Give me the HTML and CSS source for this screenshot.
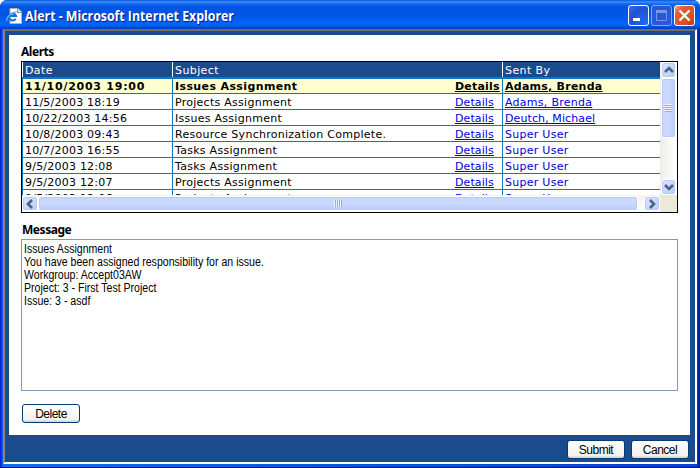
FILE: index.html
```html
<!DOCTYPE html>
<html lang="en">
<head>
<meta charset="utf-8">
<title>Alert - Microsoft Internet Explorer</title>
<link rel="stylesheet" href="styles.css">
</head>
<body>
<div class="window">
  <header class="titlebar">
    <svg class="ie" width="16" height="16" viewBox="0 0 16 16">
      <path d="M4 .5h8l3.500 3.500V15.500H4z" fill="#fff" stroke="#b5b59a"/>
      <path d="M11.500 .5V4.500h4" fill="#e4e4d4" stroke="#8e8e80"/>
      <path d="M9.700 10.800A3.500 3.500 0 1 1 10 8H3.500" fill="none" stroke="#1673d3" stroke-width="2"/>
      <path d="M1 13C-1 10 7 3 11 4" fill="none" stroke="#67b8f4" stroke-width="1.200"/>
    </svg>
    <h1>Alert - Microsoft Internet Explorer</h1>
    <div class="controls">
      <span class="ctl"><svg width="21" height="21"><rect x="5" y="13" width="7" height="3" fill="#fff"/></svg></span>
      <span class="ctl dim"><svg width="21" height="21"><path d="M5 6.500H16M5.500 6V15.500H15.500V6" fill="none" stroke="#7c94ea"/><path d="M5 6.500H16" stroke="#7c94ea" stroke-width="3"/></svg></span>
      <span class="ctl close"><svg width="21" height="21"><path d="M5.500 5.500l10 10M15.500 5.500l-10 10" stroke="#fff" stroke-width="2.300"/></svg></span>
    </div>
  </header>
  <div class="client">
    <main class="page">
      <h2>Alerts</h2>
      <section class="listbox">
        <div class="rows">
          <div class="row head"><span>Date</span><span>Subject</span><span></span><span>Sent By</span></div>
          <div class="row sel"><span>11/10/2003 19:00</span><span>Issues Assignment</span><span><a>Details</a></span><span><a>Adams, Brenda</a></span></div>
          <div class="row"><span>11/5/2003 18:19</span><span>Projects Assignment</span><span><a>Details</a></span><span><a>Adams, Brenda</a></span></div>
          <div class="row"><span>10/22/2003 14:56</span><span>Issues Assignment</span><span><a>Details</a></span><span><a class="tight">Deutch, Michael</a></span></div>
          <div class="row"><span>10/8/2003 09:43</span><span>Resource Synchronization Complete.</span><span><a>Details</a></span><span class="user">Super User</span></div>
          <div class="row"><span>10/7/2003 16:55</span><span>Tasks Assignment</span><span><a>Details</a></span><span class="user">Super User</span></div>
          <div class="row"><span>9/5/2003 12:08</span><span>Tasks Assignment</span><span><a>Details</a></span><span class="user">Super User</span></div>
          <div class="row"><span>9/5/2003 12:07</span><span>Projects Assignment</span><span><a>Details</a></span><span class="user">Super User</span></div>
          <div class="row"><span>9/5/2003 12:06</span><span>Projects Assignment</span><span><a>Details</a></span><span class="user">Super User</span></div>
        </div>
        <div class="vbar">
          <span class="arrow"><svg width="14" height="14"><path d="M3 9l4-4 4 4" /></svg></span>
          <span class="thumb"><i></i></span>
          <span class="arrow end"><svg width="14" height="14"><path d="M3 5l4 4 4-4"/></svg></span>
        </div>
        <div class="hbar">
          <span class="arrow"><svg width="14" height="14"><path d="M9 3L5 7l4 4"/></svg></span>
          <span class="thumb"><i></i></span>
          <span class="arrow end"><svg width="14" height="14"><path d="M5 3l4 4-4 4"/></svg></span>
        </div>
        <div class="corner"></div>
      </section>
      <h2 class="msg-title">Message</h2>
      <div class="message"><p>Issues Assignment</p><p>You have been assigned responsibility for an issue.</p><p>Workgroup: Accept03AW</p><p>Project: 3 - First Test Project</p><p>Issue: 3 - asdf</p></div>
      <button class="delete">Delete</button>
    </main>
    <footer class="footer"><button>Submit</button><button>Cancel</button></footer>
  </div>
</div>
</body>
</html>
```

FILE: styles.css
```css
* { box-sizing: border-box; }
body { margin: 0; background: #fff; font-family: "Liberation Sans", sans-serif; overflow: hidden; }
h1, h2, p { margin: 0; }
.window { width: 700px; height: 468px; display: flex; flex-direction: column; padding: 0 3px 3px; border-radius: 7px 7px 0 0; overflow: hidden; background: linear-gradient(90deg, #0019cf 0, #0831d9 1px, #166aee 3px, #0855dd 50%, #0441d8 697px, #001da0 699px); border-bottom: 1px solid #00138c; }
.titlebar { height: 29px; flex: none; margin: 0 -3px; padding: 2px 5px 0 6px; display: flex; align-items: center; background: linear-gradient(#0058e0 0, #3c8cf8 2px, #1268ee 4px, #0054e3 7px, #0055e5 15px, #0264fb 22px, #0264fb 25px, #0046cf 28px, #003dbc 29px); }
.ie { flex: none; margin-right: 3px; }
h1 { font: bold 14px/20px "Open Sans", sans-serif; color: #fff; text-shadow: 1px 1px 1px #0a1883; white-space: nowrap; transform: scaleX(.88); transform-origin: 0 50%; }
.controls { margin-left: auto; display: flex; gap: 2px; }
.ctl { width: 21px; height: 21px; border: 1px solid #fff; border-radius: 3px; background: radial-gradient(circle at 80% 80%, #1d68f4, #2350d2 60%, #3c6fe5); display: flex; justify-content: center; align-items: center; overflow: hidden; }
.ctl svg { flex: none; }
.dim { border-color: #8ba4ef; background: #2858d6; }
.close { background: linear-gradient(135deg, #f0a58d 0, #e25d3a 25%, #de4c20 75%, #c03909); }
.client { flex: 1; min-height: 0; display: flex; flex-direction: column; border: 2px solid; border-color: #716f64 #fff #fff #8d8376; background: #1a4b8c; padding: 4px 5px 0 4px; }
.page { height: 400px; flex: none; background: #fff; padding: 8px 12px 0; }
h2 { font: bold 12px/17px "Noto Sans", sans-serif; letter-spacing: -0.45px; height: 18px; }
.listbox { width: 657px; height: 152px; border: 1px solid #000; display: grid; grid-template-columns: 638px 17px; grid-template-rows: 133px 17px; background: #ece9d8; }
.rows { overflow: hidden; background: #fff; font: 11px/17px "DejaVu Sans", sans-serif; letter-spacing: 0.27px; color: #000; }
.row { display: grid; grid-template-columns: 150px 280px 50px 158px; height: 16px; border-bottom: 1px solid #0a7ac4; white-space: nowrap; }
.row span { padding-left: 2px; border-left: 1px solid #0a7ac4; height: 15px; }
.row span:nth-child(3) { border-left: 0; padding-left: 3px; letter-spacing: 0.1px; }
.row span:first-child { letter-spacing: 0.22px; }
.row.head { height: 17px; border-bottom-width: 2px; background: #1a4b8c; color: #fff; }
.row.head span { border-left-color: #fff; letter-spacing: 0.4px; }
.row.sel { height: 15px; line-height: 15px; background: #ffffce; font-weight: bold; letter-spacing: 0.38px; }
.row.sel span { height: 14px; }
.row.sel span:first-child { letter-spacing: 0.75px; }
.row.sel span:nth-child(3) { letter-spacing: 0.2px; }
.row.sel span:nth-child(4) { letter-spacing: 0.25px; }
a { color: #0000e0; text-decoration: underline; }
.sel a { color: #000; }
.tight { letter-spacing: 0.1px; }
.user { color: #0000d8; }
.vbar, .hbar { display: flex; background: linear-gradient(90deg, #eeede5, #fff); }
.vbar { flex-direction: column; padding: 0 1px; }
.hbar { background: linear-gradient(#f3f1ec, #fff); padding: 1px 0; }
.arrow, .thumb { border: 1px solid #fff; border-radius: 3px; background: linear-gradient(135deg, #dce6ff, #b7ccfb); box-shadow: inset 0 0 0 1px #b9cbf5; display: flex; align-items: center; justify-content: center; flex: none; }
.arrow { width: 15px; height: 16px; }
.end { margin-left: auto; }
.arrow path { fill: none; stroke: #4d6185; stroke-width: 2.500; }
.vbar .end { margin: auto 0 0; }
.vbar .thumb { width: 15px; height: 60px; background: linear-gradient(90deg, #cbd8ff 60%, #b5cafa); }
.hbar .arrow { height: 15px; width: 16px; }
.hbar .thumb { width: 600px; height: 15px; background: linear-gradient(#cad7ff 60%, #b4cafa); }
.thumb i { display: block; }
.vbar i { width: 7px; height: 8px; background: repeating-linear-gradient(#eef4ff 0 1px, #8caff0 1px 2px); }
.hbar i { width: 8px; height: 7px; background: repeating-linear-gradient(90deg, #eef4ff 0 1px, #8caff0 1px 2px); }
.msg-title { margin-top: 9px; height: 17px; line-height: 16px; padding-left: 1px; }
.message { width: 657px; height: 152px; border: 1px solid #7f9db9; padding: 3px 2px; font-size: 12px; line-height: 13px; }
.message p { transform: scaleX(.88); transform-origin: 0 50%; }
button { display: block; width: 58px; height: 19px; padding: 0; border: 1px solid #003c74; border-radius: 3px; background: linear-gradient(#fff, #f3f2ed 85%, #d6d0c5); color: #000; font: 12px/16px "Liberation Sans", sans-serif; letter-spacing: -0.5px; }
.delete { margin: 13px 0 0 1px; }
.footer { display: flex; justify-content: flex-end; gap: 6px; padding: 5px 1px 0 0; }
```
